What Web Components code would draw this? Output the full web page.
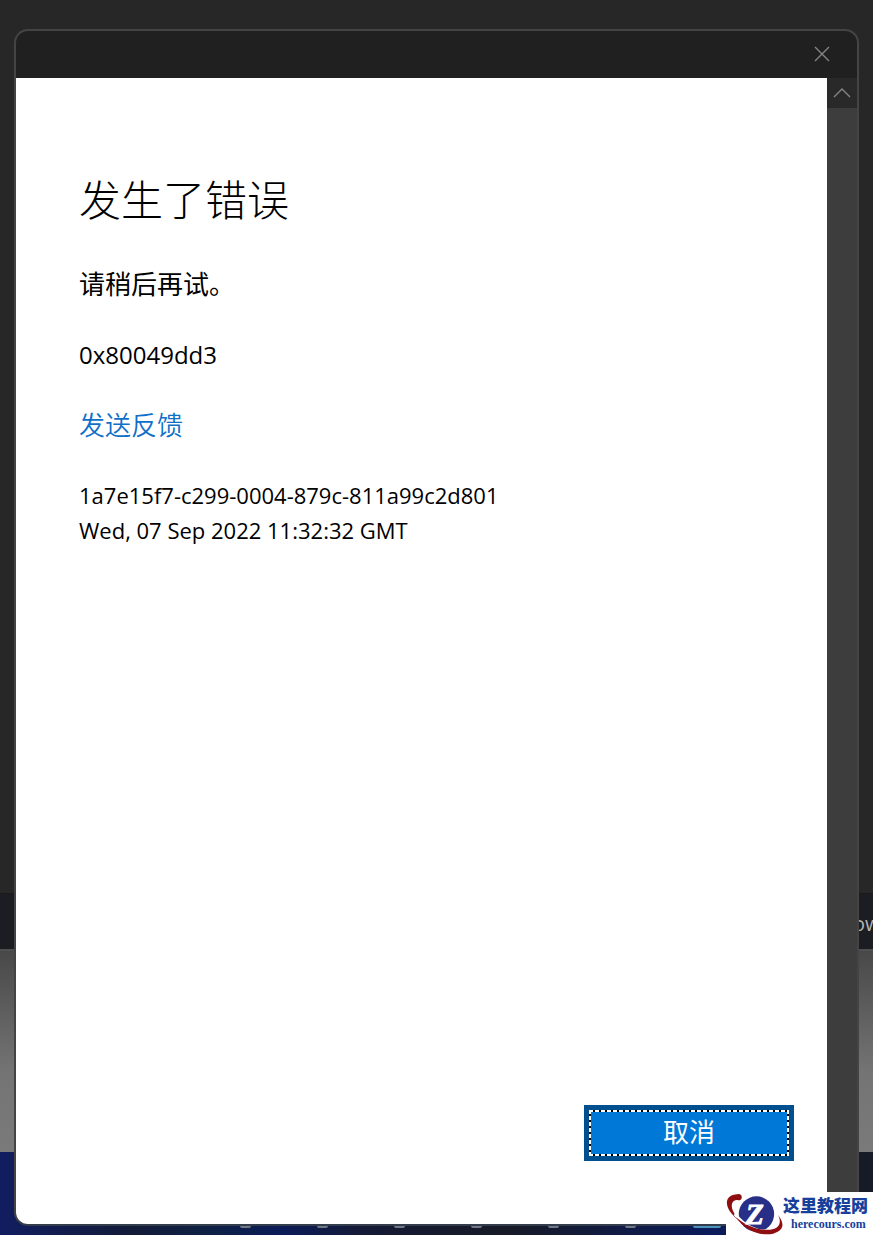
<!DOCTYPE html>
<html lang="zh-CN">
<head>
<meta charset="utf-8">
<meta name="viewport" content="width=device-width, initial-scale=1">
<title>发生了错误</title>
<style>
  body {
    margin: 0;
    min-height: 100vh;
    display: grid;
    font-family: "Open Sans", "Noto Sans CJK SC", sans-serif;
    color: #000;
  }
  desktop-backdrop, dialog-window, site-mark {
    grid-area: 1 / 1;
    min-width: 0;
  }
</style>
</head>
<body>
<desktop-backdrop></desktop-backdrop>
<dialog-window>
  <error-message code="0x80049dd3" request="1a7e15f7-c299-0004-879c-811a99c2d801" time="Wed, 07 Sep 2022 11:32:32 GMT">
    <span slot="title">发生了错误</span>
    请稍后再试。
  </error-message>
  <focus-button slot="actions">取消</focus-button>
</dialog-window>
<site-mark></site-mark>

<script>
class DesktopBackdrop extends HTMLElement {
  constructor() {
    super();
    this.attachShadow({mode: 'open'});
  }

  connectedCallback() {
    this.shadowRoot.innerHTML = `
    <style>
    :host{
      display:flex;
      flex-direction:column;
      background-color:#272727;
    }
    .wall{
      flex:1;
    }
    .strip{
      display:flex;
      justify-content:flex-end;
      height:55px;
      border-top:1px solid #1a1a1a;
      border-bottom:2px solid #505050;
      background-color:#1c1d22;
      color:#b4b4b4;
      font-size:20px;
      line-height:60px;
    }
    .strip span{
      width:20px;
      overflow:hidden;
    }
    .page{
      height:201px;
      background:linear-gradient(#484848, #747474 60%, #7a7a7a);
    }
    .taskbar{
      display:flex;
      align-items:flex-end;
      gap:66px;
      height:76px;
      padding:0 0 7px 240px;
      background:linear-gradient(90deg, #111d60 0%, #131b38 15%, #0e2144 24%, #0b1b58 32%, #151a35 42%, #171a26 58%, #0b1b5c 82%, #171b28 90%);
    }
    .dot{
      width:11px;
      height:4px;
      border-radius:0 0 2px 2px;
      background-color:#737887;
    }
    .active{
      width:28px;
      margin-left:-9px;
      background-color:#4b93bd;
    }
    </style>
    <div class="wall"></div>
    <div class="strip"><span>ow</span></div>
    <div class="page"></div>
    <div class="taskbar">
      ${'<div class="dot"></div>'.repeat(6)}
      <div class="dot active"></div>
    </div>`;
  }
}

class DialogWindow extends HTMLElement {
  constructor() {
    super();
    this.attachShadow({mode: 'open'});
  }

  connectedCallback() {
    this.shadowRoot.innerHTML = `
    <style>
    :host{
      display:flex;
      flex-direction:column;
      margin:29px 14px 9px;
      border:2px solid #444;
      border-bottom-color:#343d4c;
      border-radius:14px;
      overflow:hidden;
      background-color:#202020;
    }
    header{
      display:flex;
      justify-content:flex-end;
      align-items:center;
      height:45px;
      padding:0 23px 2px 0;
    }
    button{
      display:grid;
      place-items:center;
      padding:0;
      border:0;
      background:none;
    }
    .close{
      width:24px;
      height:24px;
    }
    svg{
      display:block;
      fill:none;
      stroke:#858585;
      stroke-width:1.4;
    }
    .body{
      flex:1;
      display:flex;
    }
    main{
      flex:1;
      display:flex;
      flex-direction:column;
      justify-content:space-between;
      padding:92px 33px 63px 63px;
      background-color:#fff;
    }
    .actions{
      display:flex;
      justify-content:flex-end;
    }
    .scroll{
      width:30px;
      background-color:#3d3d3d;
    }
    .up{
      width:30px;
      height:30px;
      background-color:#292929;
    }
    </style>
    <header>
      <button class="close" aria-label="关闭">
        <svg width="18" height="18" viewBox="0 0 18 18"><path d="M2 2L16 16M16 2L2 16"/></svg>
      </button>
    </header>
    <div class="body">
      <main>
        <slot></slot>
        <div class="actions"><slot name="actions"></slot></div>
      </main>
      <div class="scroll">
        <button class="up" aria-label="向上滚动">
          <svg width="18" height="10" viewBox="0 0 18 10"><path d="M1 9L9 1L17 9"/></svg>
        </button>
      </div>
    </div>`;
  }
}

class ErrorMessage extends HTMLElement {
  constructor() {
    super();
    this.attachShadow({mode: 'open'});
  }

  connectedCallback() {
    this.shadowRoot.innerHTML = `
    <style>
    :host{
      display:block;
      font-size:26px;
      line-height:35px;
    }
    h1{
      margin:0 0 37px;
      font-size:42px;
      font-weight:300;
      line-height:60px;
    }
    p{
      margin:0 0 35px;
    }
    .code{
      margin-bottom:36px;
      font-size:24px;
    }
    .details{
      margin:0;
      font-size:22px;
    }
    a{
      color:#0f6fc9;
      font-weight:350;
      text-decoration:none;
    }
    </style>
    <h1><slot name="title"></slot></h1>
    <p><slot></slot></p>
    <p class="code">${this.getAttribute('code')}</p>
    <p><a href="#">发送反馈</a></p>
    <p class="details">${this.getAttribute('request')}<br>${this.getAttribute('time')}</p>`;
  }
}

class FocusButton extends HTMLElement {
  constructor() {
    super();
    this.attachShadow({mode: 'open'});
  }

  connectedCallback() {
    this.shadowRoot.innerHTML = `
    <style>
    :host{
      display:block;
    }
    button{
      display:block;
      width:210px;
      padding:1px;
      border:4px solid #00508f;
      background-color:#00508f;
      color:#fff;
      font:inherit;
      font-size:26px;
      line-height:40px;
    }
    /* dashed focus ring, one gradient for each side */
    span{
      display:block;
      padding:2px 2px 4px;
      --dash:#fff 0 4px, #000 4px 6px;
      background:
        repeating-linear-gradient(90deg, var(--dash)) top / 100% 2px no-repeat,
        repeating-linear-gradient(90deg, var(--dash)) bottom / 100% 2px no-repeat,
        repeating-linear-gradient(var(--dash)) left / 2px 100% no-repeat,
        repeating-linear-gradient(var(--dash)) right / 2px 100% no-repeat,
        #0078d7;
    }
    </style>
    <button><span><slot></slot></span></button>`;
  }
}

class SiteMark extends HTMLElement {
  constructor() {
    super();
    this.attachShadow({mode: 'open'});
  }

  connectedCallback() {
    this.shadowRoot.innerHTML = `
    <style>
    :host{
      display:flex;
      align-self:end;
      justify-self:end;
      position:relative;
      width:147px;
      height:43px;
      background-color:#fff;
      color:#173f9b;
    }
    svg{
      flex:none;
      width:57px;
      height:43px;
    }
    .name{
      font-family:"Noto Sans CJK SC", sans-serif;
      font-size:17px;
      font-weight:900;
      line-height:26px;
      white-space:nowrap;
    }
    .site{
      padding-left:8px;
      font-family:"Liberation Serif", serif;
      font-size:12px;
      font-weight:700;
      line-height:12px;
    }
    </style>
    <svg viewBox="0 0 58 43" aria-hidden="true">
      <circle cx="31" cy="22" r="18" fill="#282f86"/>
      <path d="M14 2C6 1 0 5 1 12C2 19 8 24 13 29C9 22 5 17 6 12C7 8 10 7 14 8Z" fill="#8f0e12"/>
      <circle cx="13" cy="5" r="3" fill="#8f0e12"/>
      <path d="M9 22C18 34 32 41 44 39C54 37 57 31 52 24" fill="none" stroke="#fff" stroke-width="3"/>
      <path d="M10 25C18 38 34 45 48 42C59 39 60 32 53 23C57 31 54 37 45 38C33 39 20 34 10 25Z" fill="#8f0e12"/>
      <text x="20" y="32" fill="#fff" stroke="#fff" stroke-width="1" font-family="Liberation Serif, serif" font-size="30" font-weight="700" font-style="italic">Z</text>
    </svg>
    <div>
      <div class="name">这里教程网</div>
      <div class="site">herecours.com</div>
    </div>`;
  }
}

customElements.define('desktop-backdrop', DesktopBackdrop);
customElements.define('dialog-window', DialogWindow);
customElements.define('error-message', ErrorMessage);
customElements.define('focus-button', FocusButton);
customElements.define('site-mark', SiteMark);
</script>
</body>
</html>
